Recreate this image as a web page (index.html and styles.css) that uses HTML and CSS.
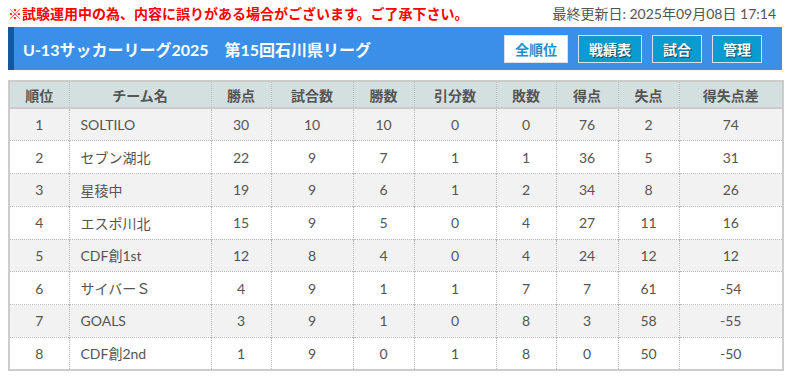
FILE: index.html
```html
<!DOCTYPE html>
<html lang="ja">
<head>
<meta charset="utf-8">
<title>順位表</title>
<link rel="stylesheet" href="styles.css">
</head>
<body>
<div class="page">
  <div class="topline">
    <p class="notice">※試験運用中の為、内容に誤りがある場合がございます。ご了承下さい。</p>
    <p class="updated">最終更新日: 2025年09月08日 17:14</p>
  </div>
  <div class="bar">
    <h1 class="title">U-13サッカーリーグ2025　第15回石川県リーグ</h1>
    <nav class="nav">
      <a class="btn active">全順位</a>
      <a class="btn">戦績表</a>
      <a class="btn small">試合</a>
      <a class="btn small">管理</a>
    </nav>
  </div>
  <table class="standings">
    <colgroup>
      <col class="c1"><col class="c2"><col class="c3"><col class="c4"><col class="c5">
      <col class="c6"><col class="c7"><col class="c8"><col class="c9"><col class="c10">
    </colgroup>
    <thead>
      <tr><th>順位</th><th>チーム名</th><th>勝点</th><th>試合数</th><th>勝数</th><th>引分数</th><th>敗数</th><th>得点</th><th>失点</th><th>得失点差</th></tr>
    </thead>
    <tbody>
      <tr><td>1</td><td class="team">SOLTILO</td><td>30</td><td>10</td><td>10</td><td>0</td><td>0</td><td>76</td><td>2</td><td>74</td></tr>
      <tr><td>2</td><td class="team">セブン湖北</td><td>22</td><td>9</td><td>7</td><td>1</td><td>1</td><td>36</td><td>5</td><td>31</td></tr>
      <tr><td>3</td><td class="team">星稜中</td><td>19</td><td>9</td><td>6</td><td>1</td><td>2</td><td>34</td><td>8</td><td>26</td></tr>
      <tr><td>4</td><td class="team">エスポ川北</td><td>15</td><td>9</td><td>5</td><td>0</td><td>4</td><td>27</td><td>11</td><td>16</td></tr>
      <tr><td>5</td><td class="team">CDF創1st</td><td>12</td><td>8</td><td>4</td><td>0</td><td>4</td><td>24</td><td>12</td><td>12</td></tr>
      <tr><td>6</td><td class="team">サイバーＳ</td><td>4</td><td>9</td><td>1</td><td>1</td><td>7</td><td>7</td><td>61</td><td>-54</td></tr>
      <tr><td>7</td><td class="team">GOALS</td><td>3</td><td>9</td><td>1</td><td>0</td><td>8</td><td>3</td><td>58</td><td>-55</td></tr>
      <tr><td>8</td><td class="team">CDF創2nd</td><td>1</td><td>9</td><td>0</td><td>1</td><td>8</td><td>0</td><td>50</td><td>-50</td></tr>
    </tbody>
  </table>
</div>
</body>
</html>
```
FILE: styles.css
```css
* { box-sizing: border-box; }
html, body { margin: 0; padding: 0; background: #fff; }
body {
  font-family: Lato, "Noto Sans CJK JP", sans-serif;
  color: #555;
}
.page {
  width: 774px;
  margin-left: 8px;
}
.topline {
  display: flex;
  justify-content: space-between;
  align-items: center;
  height: 27px;
  padding-bottom: 2px;
}
.notice {
  margin: 0;
  color: #f00;
  font-weight: bold;
  font-size: 14px;
}
.updated {
  margin: 0 6px 0 0;
  font-size: 14px;
  color: #555;
}
.bar {
  display: flex;
  align-items: center;
  justify-content: space-between;
  height: 43px;
  background: #3a8fe9;
  border-left: 6px solid #1258a3;
  padding: 0 20px 0 9px;
}
.title {
  margin: 0;
  color: #fff;
  font-size: 16px;
  font-weight: bold;
}
.nav {
  display: flex;
  gap: 10px;
}
.btn {
  display: flex;
  align-items: center;
  justify-content: center;
  width: 64px;
  height: 28px;
  background: #0a9bd0;
  border: 1px solid #dde;
  color: #fff;
  font-weight: bold;
  font-size: 14px;
  text-shadow: 1px 1px 1px rgba(0,0,0,0.55);
}
.btn.small { width: 50px; }
.btn.active {
  background: #fff;
  color: #1b8fd0;
  text-shadow: none;
}
.standings {
  margin-top: 10px;
  width: 774px;
  border-collapse: collapse;
  table-layout: fixed;
  border: 2px solid #ccc;
  font-size: 14px;
}
.c1 { width: 60px; }
.c2 { width: 142px; }
.c3 { width: 60px; }
.c4 { width: 82px; }
.c5 { width: 61px; }
.c6 { width: 82px; }
.c7 { width: 60px; }
.c8 { width: 62px; }
.c9 { width: 61px; }
.c10 { width: 104px; }
.standings th {
  background: #d4e0e0;
  font-weight: bold;
  color: #555;
  height: 27px;
  padding: 0;
  border-left: 1px dotted #bbb;
  border-bottom: 2px solid #ccc;
  text-align: center;
}
.standings td {
  height: 32.75px;
  padding: 0;
  text-align: center;
  border-left: 1px dotted #bbb;
  border-top: 1px dotted #bbb;
  color: #555;
}
.standings th:first-child, .standings td:first-child { border-left: none; }
.standings tbody tr:first-child td { border-top: none; }
.standings tbody tr:nth-child(odd) td { background: #f2f2f2; }
.standings td.team {
  text-align: left;
  padding-left: 11px;
}
```
